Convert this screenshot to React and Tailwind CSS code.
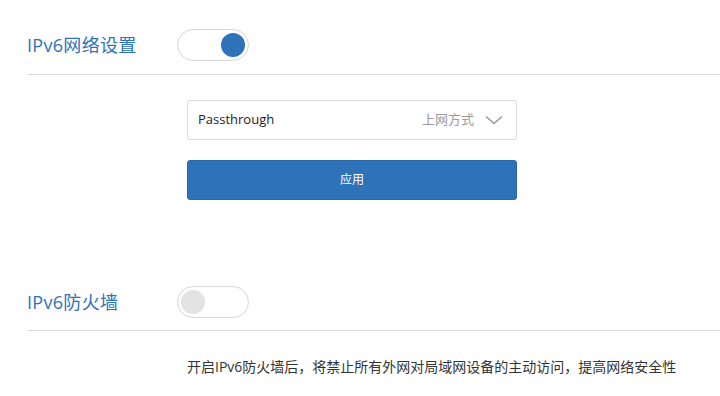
import { useState } from "react";

function Toggle({ on, onClick }) {
  return (
    <button
      onClick={onClick}
      className="relative w-[72px] h-[32px] rounded-full border border-[#d9d9d9] bg-white shadow-[inset_0_0_2px_rgba(0,0,0,0.06)]"
    >
      <span
        className={`absolute top-[3px] w-[24px] h-[24px] rounded-full ${
          on ? "right-[3px] bg-[#2e72ba]" : "left-[3px] bg-[#e3e3e3]"
        }`}
      />
    </button>
  );
}

export default function App() {
  const [ipv6, setIpv6] = useState(true);
  const [firewall, setFirewall] = useState(false);

  return (
    <div
      className="w-[720px] h-[396px] bg-white overflow-hidden"
      style={{ fontFamily: '"Open Sans", "Noto Sans CJK SC", sans-serif' }}
    >
      {/* IPv6 settings */}
      <div className="ml-[27px] pt-[29px] h-[75px] flex items-start border-b border-[#dcdcdc]">
        <div className="w-[150px] h-[32px] flex items-center text-[18px] tracking-[0.3px] text-[#2e72ba]">IPv6网络设置</div>
        <Toggle on={ipv6} onClick={() => setIpv6(!ipv6)} />
      </div>

      <div className="ml-[187px] w-[330px] pt-[25px]">
        <div className="h-[40px] border border-[#dcdcdc] rounded-[3px] flex items-center pl-[10px] pr-[13px]">
          <span className="text-[13px] text-[#222]">Passthrough</span>
          <span className="ml-auto text-[13px] text-[#9a9a9a]">上网方式</span>
          <svg className="ml-[11px]" width="18" height="10" viewBox="0 0 18 10" fill="none">
            <path d="M1 1.5 L9 8.5 L17 1.5" stroke="#9a9a9a" strokeWidth="1.6" />
          </svg>
        </div>
        <button className="mt-[20px] w-full h-[40px] rounded-[3px] bg-[#2e72ba] border border-[#2a66a8] text-white text-[12px]">
          应用
        </button>
      </div>

      {/* IPv6 firewall */}
      <div className="ml-[27px] mt-[86px] h-[45px] flex items-start border-b border-[#dcdcdc]">
        <div className="w-[150px] h-[32px] flex items-center text-[18px] tracking-[0.3px] text-[#2e72ba]">IPv6防火墙</div>
        <Toggle on={firewall} onClick={() => setFirewall(!firewall)} />
      </div>

      <p className="ml-[187px] mt-[25px] text-[14px] text-[#333]">
        开启IPv6防火墙后，将禁止所有外网对局域网设备的主动访问，提高网络安全性
      </p>
    </div>
  );
}
